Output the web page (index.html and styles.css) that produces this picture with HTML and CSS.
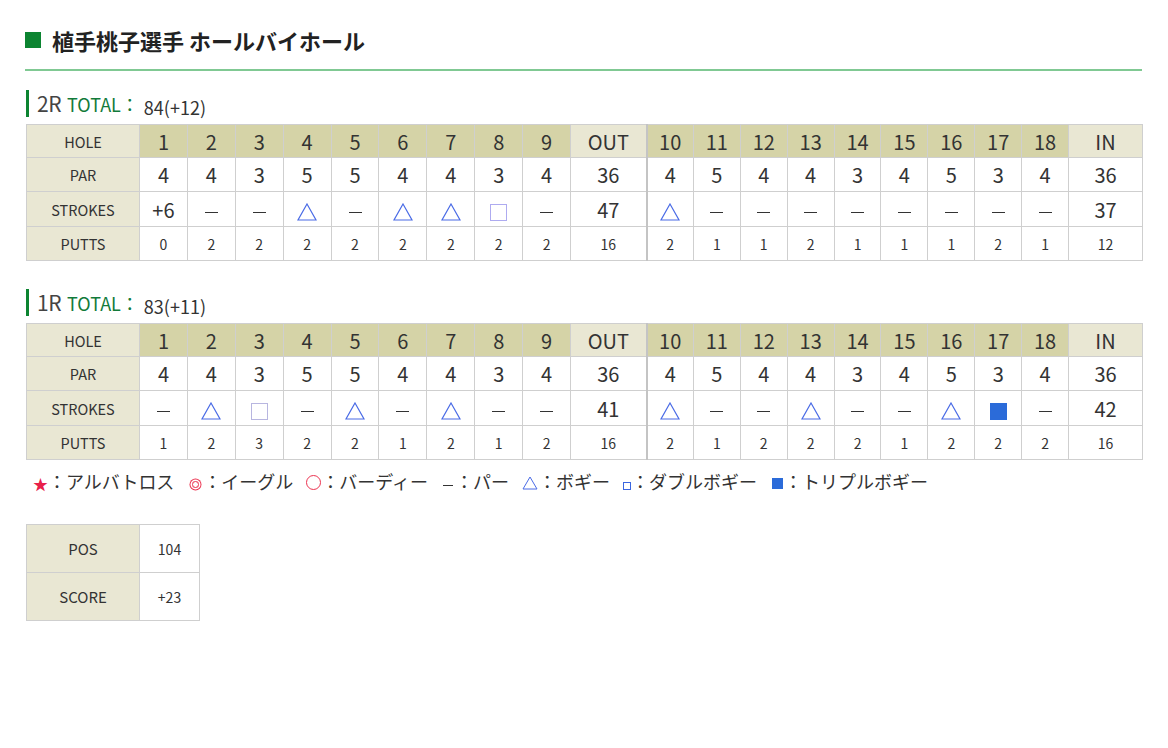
FILE: index.html
```html
<!DOCTYPE html>
<html lang="ja">
<head>
  <meta charset="UTF-8" />
  <title>植手桃子選手 ホールバイホール</title>
  <link rel="stylesheet" href="styles.css">
</head>
<body>
  <div class="page">
    <h1 class="title"><span class="title-mark"></span>植手桃子選手 ホールバイホール</h1>

    <!-- 2R -->
    <h2 class="round first"><span class="round-no">2R</span><span class="round-total">TOTAL：</span><span class="round-score">84(+12)</span></h2>
    <table class="card">
      <colgroup>
        <col class="c-label">
        <col class="c-out-hole" span="9">
        <col class="c-sum">
        <col class="c-in-hole" span="9">
        <col class="c-sum2">
      </colgroup>
      <tr class="r-hole">
        <th class="label">HOLE</th>
        <th>1</th><th>2</th><th>3</th><th>4</th><th>5</th><th>6</th><th>7</th><th>8</th><th>9</th>
        <th class="sum">OUT</th>
        <th class="sep">10</th><th>11</th><th>12</th><th>13</th><th>14</th><th>15</th><th>16</th><th>17</th><th>18</th>
        <th class="sum">IN</th>
      </tr>
      <tr class="r-par">
        <th class="label">PAR</th>
        <td>4</td><td>4</td><td>3</td><td>5</td><td>5</td><td>4</td><td>4</td><td>3</td><td>4</td>
        <td>36</td>
        <td class="sep">4</td><td>5</td><td>4</td><td>4</td><td>3</td><td>4</td><td>5</td><td>3</td><td>4</td>
        <td>36</td>
      </tr>
      <tr class="r-stroke">
        <th class="label">STROKES</th>
        <td>+6</td>
        <td><span class="par"></span></td>
        <td><span class="par"></span></td>
        <td><svg class="bogey" viewBox="0 0 20 18"><path d="M10 1 L19 17 L1 17 Z" /></svg></td>
        <td><span class="par"></span></td>
        <td><svg class="bogey" viewBox="0 0 20 18"><path d="M10 1 L19 17 L1 17 Z" /></svg></td>
        <td><svg class="bogey" viewBox="0 0 20 18"><path d="M10 1 L19 17 L1 17 Z" /></svg></td>
        <td><span class="dbogey"></span></td>
        <td><span class="par"></span></td>
        <td>47</td>
        <td class="sep"><svg class="bogey" viewBox="0 0 20 18"><path d="M10 1 L19 17 L1 17 Z" /></svg></td>
        <td><span class="par"></span></td>
        <td><span class="par"></span></td>
        <td><span class="par"></span></td>
        <td><span class="par"></span></td>
        <td><span class="par"></span></td>
        <td><span class="par"></span></td>
        <td><span class="par"></span></td>
        <td><span class="par"></span></td>
        <td>37</td>
      </tr>
      <tr class="r-putt">
        <th class="label">PUTTS</th>
        <td>0</td><td>2</td><td>2</td><td>2</td><td>2</td><td>2</td><td>2</td><td>2</td><td>2</td>
        <td>16</td>
        <td class="sep">2</td><td>1</td><td>1</td><td>2</td><td>1</td><td>1</td><td>1</td><td>2</td><td>1</td>
        <td>12</td>
      </tr>
    </table>

    <!-- 1R -->
    <h2 class="round"><span class="round-no">1R</span><span class="round-total">TOTAL：</span><span class="round-score">83(+11)</span></h2>
    <table class="card">
      <colgroup>
        <col class="c-label">
        <col class="c-out-hole" span="9">
        <col class="c-sum">
        <col class="c-in-hole" span="9">
        <col class="c-sum2">
      </colgroup>
      <tr class="r-hole">
        <th class="label">HOLE</th>
        <th>1</th><th>2</th><th>3</th><th>4</th><th>5</th><th>6</th><th>7</th><th>8</th><th>9</th>
        <th class="sum">OUT</th>
        <th class="sep">10</th><th>11</th><th>12</th><th>13</th><th>14</th><th>15</th><th>16</th><th>17</th><th>18</th>
        <th class="sum">IN</th>
      </tr>
      <tr class="r-par">
        <th class="label">PAR</th>
        <td>4</td><td>4</td><td>3</td><td>5</td><td>5</td><td>4</td><td>4</td><td>3</td><td>4</td>
        <td>36</td>
        <td class="sep">4</td><td>5</td><td>4</td><td>4</td><td>3</td><td>4</td><td>5</td><td>3</td><td>4</td>
        <td>36</td>
      </tr>
      <tr class="r-stroke">
        <th class="label">STROKES</th>
        <td><span class="par"></span></td>
        <td><svg class="bogey" viewBox="0 0 20 18"><path d="M10 1 L19 17 L1 17 Z" /></svg></td>
        <td><span class="dbogey gray"></span></td>
        <td><span class="par"></span></td>
        <td><svg class="bogey" viewBox="0 0 20 18"><path d="M10 1 L19 17 L1 17 Z" /></svg></td>
        <td><span class="par"></span></td>
        <td><svg class="bogey" viewBox="0 0 20 18"><path d="M10 1 L19 17 L1 17 Z" /></svg></td>
        <td><span class="par"></span></td>
        <td><span class="par"></span></td>
        <td>41</td>
        <td class="sep"><svg class="bogey" viewBox="0 0 20 18"><path d="M10 1 L19 17 L1 17 Z" /></svg></td>
        <td><span class="par"></span></td>
        <td><span class="par"></span></td>
        <td><svg class="bogey" viewBox="0 0 20 18"><path d="M10 1 L19 17 L1 17 Z" /></svg></td>
        <td><span class="par"></span></td>
        <td><span class="par"></span></td>
        <td><svg class="bogey" viewBox="0 0 20 18"><path d="M10 1 L19 17 L1 17 Z" /></svg></td>
        <td><span class="tbogey"></span></td>
        <td><span class="par"></span></td>
        <td>42</td>
      </tr>
      <tr class="r-putt">
        <th class="label">PUTTS</th>
        <td>1</td><td>2</td><td>3</td><td>2</td><td>2</td><td>1</td><td>2</td><td>1</td><td>2</td>
        <td>16</td>
        <td class="sep">2</td><td>1</td><td>2</td><td>2</td><td>2</td><td>1</td><td>2</td><td>2</td><td>2</td>
        <td>16</td>
      </tr>
    </table>

    <!-- Legend -->
    <ul class="legend">
      <li><span class="lg-star">★</span>：アルバトロス</li>
      <li><span class="lg-eagle"></span>：イーグル</li>
      <li><span class="lg-birdie"></span>：バーディー</li>
      <li><span class="lg-par"></span>：パー</li>
      <li><svg class="lg-bogey" viewBox="0 0 16 14"><path d="M8 1 L15 13 L1 13 Z" /></svg>：ボギー</li>
      <li><span class="lg-dbogey"></span>：ダブルボギー</li>
      <li><span class="lg-tbogey"></span>：トリプルボギー</li>
    </ul>

    <table class="summary">
      <tr><th>POS</th><td>104</td></tr>
      <tr><th>SCORE</th><td>+23</td></tr>
    </table>
  </div>
</body>
</html>
```

FILE: styles.css
```css
body {
  margin: 0;
  padding: 0;
  background: #fff;
  color: #333;
  font-family: "Noto Sans CJK JP", "Noto Sans", sans-serif;
}

.page {
  padding: 24px 26px 0 26px;
}

.title {
  display: flex;
  align-items: center;
  margin: 0 0 0 -1px;
  font-size: 22px;
  font-weight: bold;
  color: #222;
  line-height: 32px;
  padding-bottom: 13px;
  border-bottom: 2px solid #80c993;
}

.title-mark {
  display: inline-block;
  width: 16px;
  height: 16px;
  background: #0c8431;
  margin-right: 11px;
}

.round {
  display: flex;
  align-items: baseline;
  margin: 28px 0 7px 0;
  height: 27px;
  line-height: 27px;
  border-left: 3px solid #0c8431;
  padding-left: 8px;
  font-weight: normal;
}

.round.first {
  margin-top: 19px;
}

.round-no {
  font-size: 21px;
  color: #444;
  letter-spacing: -0.5px;
  margin-right: 6px;
}

.round-total {
  font-size: 18px;
  color: #127a3a;
  margin-right: 5px;
}

.round-score {
  font-size: 18px;
  color: #333;
  position: relative;
  top: 3px;
}

.card {
  width: 1116px;
  border-collapse: collapse;
  table-layout: fixed;
  border: 1px solid #c8c8c8;
}

.c-label { width: 113px; }
.c-out-hole { width: 47.9px; }
.c-sum { width: 76px; }
.c-in-hole { width: 46.9px; }
.c-sum2 { width: 74px; }

.card th,
.card td {
  border: 1px solid #cfcfcf;
  text-align: center;
  padding: 0;
  font-weight: normal;
}

.card .sep {
  border-left: 2px solid #c4c4c4;
}

.card .label {
  background: #e9e7d3;
  font-size: 14.5px;
  color: #333;
}

.r-hole th {
  background: #d5d3a7;
  font-size: 20px;
  height: 32px;
  color: #333;
}

.r-hole .sum {
  background: #e9e7d3;
}

.r-par td {
  font-size: 20px;
  height: 33px;
}

.r-stroke td {
  font-size: 20px;
  height: 34px;
}

.r-putt td {
  font-size: 14px;
  height: 33px;
}

.par {
  display: inline-block;
  width: 13px;
  height: 1px;
  background: #333;
  vertical-align: middle;
}

.bogey {
  width: 20px;
  height: 18px;
  vertical-align: middle;
  fill: none;
  stroke: #4a6be6;
  stroke-width: 1.2;
}

.dbogey {
  display: inline-block;
  width: 15px;
  height: 15px;
  border: 1.5px solid #aeabf0;
  vertical-align: middle;
}

.dbogey.gray {
  border-color: #b8b6e0;
}

.tbogey {
  display: inline-block;
  width: 17px;
  height: 17px;
  background: #2b6bd9;
  vertical-align: middle;
}

.legend {
  list-style: none;
  display: flex;
  align-items: center;
  margin: 6px 0 0 0;
  padding: 0 0 0 7px;
  height: 30px;
  font-size: 18px;
  color: #333;
}

.legend li {
  display: flex;
  align-items: center;
  margin-right: 13px;
}

.lg-star {
  color: #e8204a;
  font-size: 15px;
  padding-top: 4px;
}

.lg-eagle {
  display: inline-block;
  width: 5px;
  height: 5px;
  border: 1px solid #ec3350;
  border-radius: 50%;
  box-shadow: 0 0 0 1.5px #fff, 0 0 0 2.5px #ec3350;
  margin: 6px 4px 0 5px;
}

.lg-birdie {
  display: inline-block;
  width: 13px;
  height: 13px;
  border: 1.2px solid #ec3350;
  border-radius: 50%;
  margin-top: 3px;
}

.lg-par {
  display: inline-block;
  width: 10px;
  height: 1px;
  background: #333;
  margin: 8px 2px 0 2px;
}

.lg-bogey {
  width: 16px;
  height: 14px;
  margin-top: 4px;
  fill: none;
  stroke: #4a6be6;
  stroke-width: 1;
}

.lg-dbogey {
  display: inline-block;
  width: 6px;
  height: 6px;
  border: 1px solid #3b66e0;
  margin: 9px 0 0 0;
}

.lg-tbogey {
  display: inline-block;
  width: 11px;
  height: 11px;
  background: #2b6bd9;
  margin: 5px 1px 0 2px;
}

.summary {
  margin-top: 28px;
  border-collapse: collapse;
  border: 1px solid #cfcfcf;
}

.summary th,
.summary td {
  border: 1px solid #cfcfcf;
  height: 47px;
  padding: 0;
  text-align: center;
  font-size: 14px;
  font-weight: normal;
  color: #333;
}

.summary th {
  width: 112px;
  background: #e9e7d3;
  font-size: 15px;
}

.summary td {
  width: 59px;
}
```
